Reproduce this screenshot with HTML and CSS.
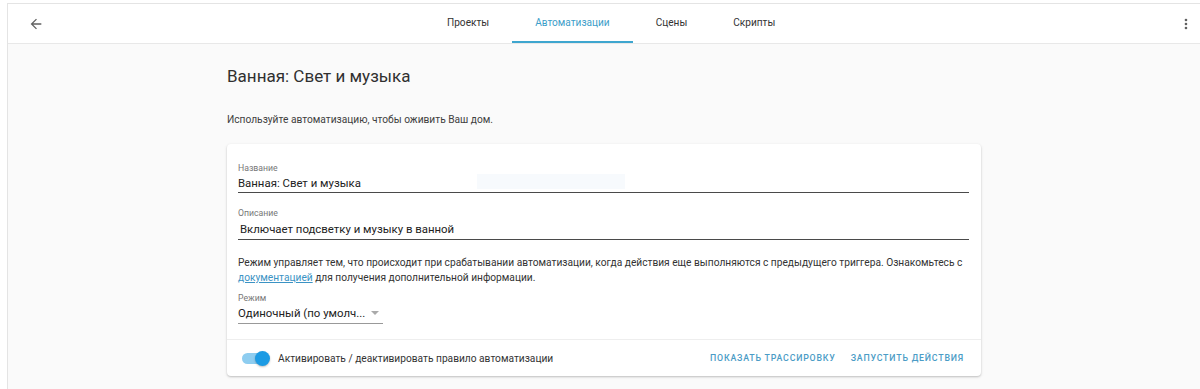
FILE: index.html
```html
<!DOCTYPE html>
<html lang="ru">

<head>
    <meta charset="UTF-8">
    <meta name="viewport" content="width=device-width, initial-scale=1.0">
    <title>Автоматизации</title>
    <link rel="stylesheet" href="styles.css">
</head>

<body>
    <div class="app">
        <header class="toolbar">
            <button class="icon-btn back">
                <svg width="16" height="16" viewBox="0 0 24 24"><path d="M20 11H7.83l5.59-5.59L12 4l-8 8 8 8 1.41-1.41L7.83 13H20v-2z" fill="#616161"/></svg>
            </button>
            <nav class="tabs">
                <a class="tab">Проекты</a>
                <a class="tab active">Автоматизации</a>
                <a class="tab">Сцены</a>
                <a class="tab">Скрипты</a>
            </nav>
            <button class="icon-btn menu">
                <svg width="16" height="16" viewBox="0 0 24 24"><path d="M12 8a2 2 0 1 0 0-4 2 2 0 0 0 0 4zm0 2a2 2 0 1 0 0 4 2 2 0 0 0 0-4zm0 6a2 2 0 1 0 0 4 2 2 0 0 0 0-4z" fill="#616161"/></svg>
            </button>
        </header>

        <main class="content">
            <h1 class="title">Ванная: Свет и музыка</h1>
            <p class="intro">Используйте автоматизацию, чтобы оживить Ваш дом.</p>

            <div class="card">
                <div class="card-body">
                    <div class="field">
                        <label>Название</label>
                        <div class="value">Ванная: Свет и музыка</div>
                        <!-- полупрозрачная подсказка поверх поля -->
                        <div class="ghost"></div>
                    </div>
                    <div class="field field-desc">
                        <label>Описание</label>
                        <div class="value">Включает подсветку и музыку в ванной</div>
                    </div>
                    <p class="hint">Режим управляет тем, что происходит при срабатывании автоматизации, когда действия еще выполняются с предыдущего триггера. Ознакомьтесь с<br><a href="#">документацией</a> для получения дополнительной информации.</p>
                    <div class="field select">
                        <label>Режим</label>
                        <div class="value">Одиночный (по умолч... <span class="arrow"></span></div>
                    </div>
                </div>
                <div class="card-actions">
                    <div class="switch-row">
                        <span class="switch"><span class="knob"></span></span>
                        <span>Активировать / деактивировать правило автоматизации</span>
                    </div>
                    <div class="buttons">
                        <button class="text-btn">Показать трассировку</button>
                        <button class="text-btn">Запустить действия</button>
                    </div>
                </div>
            </div>
        </main>
    </div>
</body>

</html>
```

FILE: styles.css
```css
* {
    margin: 0;
    padding: 0;
    box-sizing: border-box;
}

body {
    font-family: Roboto, "Noto Sans", sans-serif;
    color: #212121;
    background: #fff;
    padding: 3px 0 0 7px;
    height: 389px;
    overflow: hidden;
}

.app {
    border-top: 1px solid #e4e4e4;
    border-left: 1px solid #e4e4e4;
    height: 100%;
    background: #fafafa;
}

.toolbar {
    height: 40px;
    background: #fff;
    border-bottom: 1px solid #e8e8e8;
    display: flex;
    align-items: center;
}

.icon-btn {
    border: none;
    background: none;
    width: 40px;
    height: 40px;
    display: flex;
    align-items: center;
    justify-content: center;
}

.back {
    margin-left: 8px;
}

.menu {
    margin-left: auto;
    margin-right: -6px;
}

.tabs {
    display: flex;
    height: 100%;
    margin-left: 368px;
}

.tab {
    font-size: 10.1px;
    color: #333;
    height: 100%;
    display: flex;
    align-items: center;
    padding: 0 23px;
    border-bottom: 2px solid transparent;
    margin-bottom: -1px;
}

.tab.active {
    color: #3c9ec9;
    border-bottom-color: #3ea6cf;
}

.content {
    width: 754px;
    margin: 0 auto;
    padding-top: 21px;
}

.title {
    font-size: 17px;
    font-weight: 400;
    line-height: 22px;
    color: #303030;
}

.intro {
    font-size: 10.2px;
    line-height: 16px;
    color: #404040;
    margin-top: 25px;
}

.card {
    margin-top: 16px;
    background: #fff;
    border-radius: 4px;
    box-shadow: 0 1px 2px rgba(0, 0, 0, 0.2), 0 1px 4px rgba(0, 0, 0, 0.06);
}

.card-body {
    padding: 18px 12px 15px 11px;
}

.field {
    border-bottom: 1px solid #4a4a4a;
    position: relative;
}

.field label {
    display: block;
    font-size: 8.7px;
    line-height: 12px;
    color: #777;
}

.field .value {
    font-size: 11.4px;
    line-height: 18px;
    color: #222;
}

.field-desc {
    margin-top: 14px;
}

.field-desc .value {
    line-height: 20px;
    padding-left: 2px;
}

.ghost {
    position: absolute;
    left: 239px;
    top: 12px;
    width: 148px;
    height: 15px;
    background: #f7fafd;
}

.hint {
    margin-top: 15px;
    font-size: 10.2px;
    line-height: 15px;
    color: #333;
}

.hint a {
    color: #3b93c4;
}

.select {
    margin-top: 7px;
    width: 145px;
    border-bottom-color: #999;
}

.select .value {
    padding-bottom: 1px;
    display: flex;
    align-items: center;
    white-space: nowrap;
}

.arrow {
    margin-left: 6px;
    width: 0;
    height: 0;
    border-left: 4px solid transparent;
    border-right: 4px solid transparent;
    border-top: 4px solid #aaa;
}

.card-actions {
    border-top: 1px solid #eee;
    height: 37px;
    display: flex;
    align-items: center;
    justify-content: space-between;
    padding: 0 17px 0 15px;
}

.switch-row {
    display: flex;
    align-items: center;
    font-size: 10.2px;
    color: #333;
}

.switch {
    width: 26px;
    height: 11px;
    border-radius: 6px;
    background: #8ecdf0;
    position: relative;
    margin-right: 10px;
}

.knob {
    position: absolute;
    right: -2px;
    top: -2px;
    width: 15px;
    height: 15px;
    border-radius: 50%;
    background: #1c9be4;
    box-shadow: 0 1px 2px rgba(0, 0, 0, 0.25);
}

.buttons {
    display: flex;
    gap: 15px;
}

.text-btn {
    border: none;
    background: none;
    font-family: Roboto, sans-serif;
    font-size: 8.8px;
    font-weight: 500;
    letter-spacing: 0.8px;
    text-transform: uppercase;
    color: #4b9cc6;
    padding: 0;
}
```
